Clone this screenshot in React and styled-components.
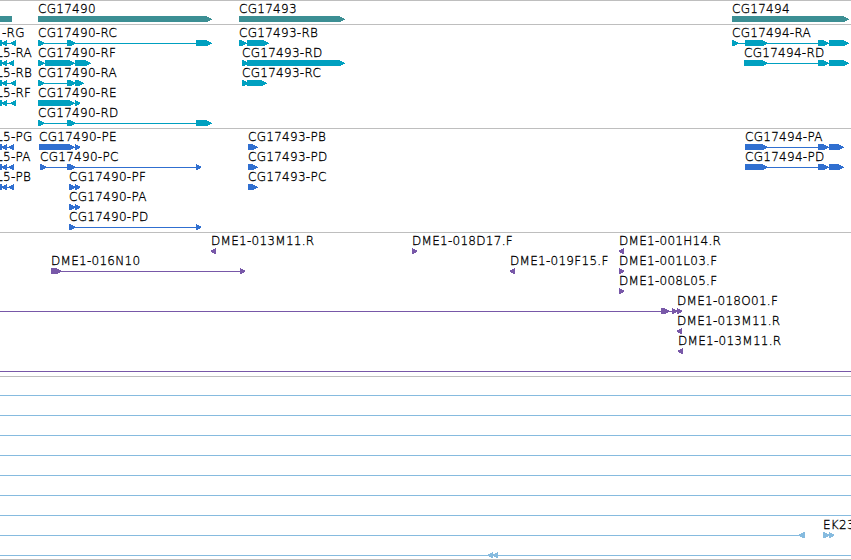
import React from 'react';
import styled, { createGlobalStyle } from 'styled-components';

const colors = {
  gene: '#3c8f94',
  transcript: '#00a0c0',
  protein: '#306fd0',
  clone: '#7858a8',
  insertion: '#86bbdf',
  border: '#bebebe',
  black: '#000000',
  white: '#ffffff',
};

const GlobalStyle = createGlobalStyle`
  body {
    background-color: ${colors.white};
    margin: 0;
    overflow: hidden;
  }
`;

const Viewer = styled.main`
  display: flex;
  flex-direction: column;
  height: 560px;
  overflow: hidden;
  width: 851px;
`;

const Track = styled.section`
  border-top: 1px solid ${colors.border};
  box-sizing: border-box;
  color: ${p => p.color};
  flex: none;
  height: ${p => p.height}px;
  padding-top: 2px;
`;

const Row = styled.div`
  height: 20px;
  position: relative;
`;

// labels sit at their feature's place on the sequence
const Label = styled.span`
  color: ${colors.black};
  font-family: "DejaVu Sans", sans-serif;
  font-size: 12px;
  font-weight: 200;
  left: ${p => p.x}px;
  letter-spacing: 0.28px;
  line-height: 14px;
  position: absolute;
  top: -1px;
  white-space: nowrap;
  -webkit-text-stroke: 0.3px ${colors.black};
`;

const Glyphs = styled.svg`
  display: block;
  fill: currentColor;
  height: 20px;
  shape-rendering: crispEdges;
  width: 851px;
`;

// how far each pixel row of an arrow head stays behind its tip
const wideHead = [5, 3, 1, 0, 2, 4];
const smallHead = [4, 2, 0, 0, 1, 3];

// dir: 1 forward, -1 reverse, 0 no arrow head
const Exon = ({ start, end, dir }) => {
  if (!dir) {
    return <rect x={start} y="13" width={end - start} height="6" />;
  }

  const size = end - start;
  const steps = (size > 8 ? wideHead : smallHead).map((inset, row) => (
    `H${Math.max(size - inset, 1)}V${14 + row}`
  ));
  const transform = dir > 0 ? `translate(${start} 0)` : `translate(${end} 0) scale(-1 1)`;

  return <path d={`M0 13${steps.join('')}H0Z`} transform={transform} />;
};

const left = (end, label, x) => ({
  labels: [[x, label]],
  lines: [[0, end]],
  exons: [[-3, 2, 0], [2, 7, -1], [end - 5, end, -1]],
});

const merge = (...groups) => ({
  labels: groups.flatMap(g => g.labels || []),
  lines: groups.flatMap(g => g.lines || []),
  exons: groups.flatMap(g => g.exons || []),
});

const emptyLine = { lines: [[0, 851]] };

const tracks = [
  {
    name: 'gene',
    height: 24,
    rows: [{
      labels: [[38, 'CG17490'], [239, 'CG17493'], [732, 'CG17494']],
      exons: [[0, 12, 0], [38, 212, 1], [239, 345, 1], [732, 849, 1]],
    }],
  },
  {
    name: 'transcript',
    height: 104,
    rows: [
      merge(left(16, '-RG', 2), {
        labels: [[38, 'CG17490-RC'], [239, 'CG17493-RB'], [732, 'CG17494-RA']],
        lines: [[38, 200], [239, 250], [732, 830]],
        exons: [[38, 44, 1], [67, 75, 1], [196, 212, 1], [239, 246, 1], [247, 269, 1], [732, 738, 1], [745, 768, 1], [818, 829, 1], [829, 849, 1]],
      }),
      merge(left(14, 'L5-RA', -4), {
        labels: [[38, 'CG17490-RF'], [242, 'CG17493-RD'], [744, 'CG17494-RD']],
        lines: [[38, 80], [242, 250], [744, 830]],
        exons: [[38, 44, 1], [45, 75, 1], [75, 91, 1], [242, 248, 1], [247, 345, 1], [744, 768, 1], [818, 829, 1], [829, 849, 1]],
      }),
      merge(left(16, 'L5-RB', -4), {
        labels: [[38, 'CG17490-RA'], [242, 'CG17493-RC']],
        lines: [[38, 80], [242, 250]],
        exons: [[38, 44, 1], [67, 75, 1], [75, 84, 1], [242, 248, 1], [247, 267, 1]],
      }),
      merge(left(16, 'L5-RF', -4), {
        labels: [[38, 'CG17490-RE']],
        lines: [[38, 80]],
        exons: [[38, 75, 1], [75, 80, 1]],
      }),
      {
        labels: [[38, 'CG17490-RD']],
        lines: [[38, 200]],
        exons: [[38, 44, 1], [67, 75, 1], [196, 212, 1]],
      },
    ],
  },
  {
    name: 'protein',
    height: 104,
    rows: [
      merge(left(14, 'L5-PG', -4), {
        labels: [[39, 'CG17490-PE'], [248, 'CG17493-PB'], [745, 'CG17494-PA']],
        lines: [[39, 80], [745, 830]],
        exons: [[39, 75, 1], [75, 80, 1], [248, 258, 1], [745, 768, 1], [818, 829, 1], [829, 844, 1]],
      }),
      merge(left(14, 'L5-PA', -4), {
        labels: [[40, 'CG17490-PC'], [248, 'CG17493-PD'], [745, 'CG17494-PD']],
        lines: [[40, 200], [745, 830]],
        exons: [[40, 46, 1], [67, 75, 1], [196, 201, 1], [248, 258, 1], [745, 768, 1], [818, 829, 1], [829, 844, 1]],
      }),
      merge(left(14, 'L5-PB', -4), {
        labels: [[69, 'CG17490-PF'], [248, 'CG17493-PC']],
        lines: [[69, 80]],
        exons: [[69, 75, 1], [75, 80, 1], [248, 258, 1]],
      }),
      {
        labels: [[69, 'CG17490-PA']],
        lines: [[69, 80]],
        exons: [[69, 75, 1], [75, 80, 1]],
      },
      {
        labels: [[69, 'CG17490-PD']],
        lines: [[69, 200]],
        exons: [[69, 75, 1], [196, 201, 1]],
      },
    ],
  },
  {
    name: 'clone',
    height: 144,
    rows: [
      {
        labels: [[211, 'DME1-013M11.R'], [412, 'DME1-018D17.F'], [619, 'DME1-001H14.R']],
        exons: [[211, 216, -1], [412, 417, 1], [619, 624, -1]],
      },
      {
        labels: [[51, 'DME1-016N10'], [510, 'DME1-019F15.F'], [619, 'DME1-001L03.F']],
        lines: [[51, 244]],
        exons: [[51, 62, 1], [240, 245, 1], [510, 515, -1], [619, 624, 1]],
      },
      { labels: [[619, 'DME1-008L05.F']], exons: [[619, 624, 1]] },
      {
        labels: [[677, 'DME1-018O01.F']],
        lines: [[0, 680]],
        exons: [[661, 670, 1], [672, 677, 1], [677, 682, 1]],
      },
      { labels: [[677, 'DME1-013M11.R']], exons: [[677, 682, -1]] },
      { labels: [[678, 'DME1-013M11.R']], exons: [[678, 683, -1]] },
      emptyLine,
    ],
  },
  {
    name: 'insertion',
    height: 183,
    rows: [
      emptyLine,
      emptyLine,
      emptyLine,
      emptyLine,
      emptyLine,
      emptyLine,
      emptyLine,
      {
        labels: [[823, 'EK23']],
        lines: [[0, 800], [823, 830]],
        exons: [[799, 805, -1], [823, 829, 1], [829, 834, 1]],
      },
      { lines: [[0, 851]], exons: [[488, 493, -1], [493, 498, -1]] },
    ],
  },
];

const FeatureRow = ({ labels = [], lines = [], exons = [] }) => (
  <Row>
    <Glyphs>
      {lines.map(([start, end]) => (
        <rect key={start} x={start} y="16" width={end - start} height="1" />
      ))}
      {exons.map(([start, end, dir]) => (
        <Exon key={start} start={start} end={end} dir={dir} />
      ))}
    </Glyphs>
    {labels.map(([x, text]) => (
      <Label key={x} x={x}>{text}</Label>
    ))}
  </Row>
);

const App = () => (
  <>
    <GlobalStyle />
    <Viewer>
      {tracks.map(({ name, height, rows }) => (
        <Track key={name} color={colors[name]} height={height}>
          {rows.map((row, index) => (
            <FeatureRow key={index} {...row} />
          ))}
        </Track>
      ))}
      <Track height={4} />
    </Viewer>
  </>
);

export default App;
